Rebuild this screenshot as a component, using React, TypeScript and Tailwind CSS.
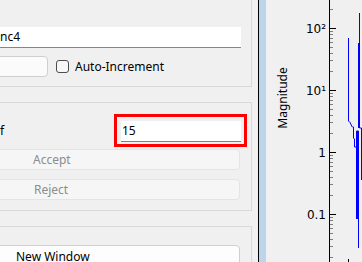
import React from "react";

const decades = [28, 90, 152, 214];

const minorTicks = () => {
  const ys: number[] = [];
  [28, 90, 152, 214, 276].forEach((base) => {
    for (let k = 2; k <= 9; k++) {
      const y = Math.round(base - 62 * Math.log10(k));
      if (y >= 0 && y <= 262) ys.push(y);
    }
  });
  return ys;
};

const Plot = () => {
  const labels: { y: number; text: string }[] = [
    { y: 28, text: "10²" },
    { y: 90, text: "10¹" },
    { y: 152, text: "1" },
    { y: 214, text: "0.1" },
  ];
  return (
    <div className="relative w-[96px] h-[262px] shrink-0">
      <svg width="96" height="262" viewBox="0 0 96 262" className="block">
        <text
          transform="translate(21,98) rotate(-90)"
          textAnchor="middle"
          fontFamily="'Noto Sans', sans-serif"
          fontSize="12"
          fill="#000"
        >
          Magnitude
        </text>
        <line x1="63.5" y1="0" x2="63.5" y2="262" stroke="#000" />
        {decades.map((y) => (
          <line key={y} x1="63.5" y1={y + 0.5} x2="70" y2={y + 0.5} stroke="#000" />
        ))}
        {minorTicks().map((y, i) => (
          <line key={i} x1="64" y1={y + 0.5} x2="67" y2={y + 0.5} stroke="#808080" />
        ))}
        {labels.map((l) => (
          <text
            key={l.text}
            x="60"
            y={l.y + 5}
            textAnchor="end"
            fontFamily="'DejaVu Sans', sans-serif"
            fontSize="12"
            fill="#000"
          >
            {l.text}
          </text>
        ))}
        <line x1="82.5" y1="259" x2="82.5" y2="262" stroke="#000" />
        <g fill="none" stroke="#0000ff" strokeWidth="1">
          <path d="M82.5,38 V121 L84.5,123 V124 L85.5,125 V126 L86.5,127 H87.5 V138 L88.5,139 V147 H90.5 V131 H92.5" />
          <path d="M92.5,131 V248" />
          <path d="M93.5,13 V43" />
          <path d="M93.5,128 H95.5 V180" />
          <path d="M91,131 V219" strokeWidth="2" />
          <path d="M93,43 V128" strokeWidth="2" />
        </g>
      </svg>
    </div>
  );
};

export default function App() {
  return (
    <div className="w-[362px] h-[262px] overflow-hidden bg-[#f0f0f0] flex text-[12px] text-black font-['Noto_Sans',sans-serif] leading-none">
      <div className="w-[252px] shrink-0 flex flex-col">
        {/* group 1 */}
        <div className="h-[87px] shrink-0 border-r border-b border-[#d9d9d9] pt-[27px] flex flex-col">
          <div className="h-[21px] w-[241px] bg-white border-b border-[#868686] flex items-center">
            nc4
          </div>
          <div className="mt-[8px] h-[21px] flex items-center">
            <div className="h-[21px] w-[52px] -ml-[4px] bg-[#fbfbfb] border border-[#cfcfcf] rounded-[4px]" />
            <div className="ml-[8px] w-[13px] h-[13px] border border-[#4d4d4d] rounded-[3px] bg-[#f7f7f7]" />
            <span className="ml-[6px]">Auto-Increment</span>
          </div>
        </div>

        {/* group 2 */}
        <div className="mt-[15px] h-[109px] shrink-0 border-t border-r border-b border-[#d9d9d9] pt-[11px] flex flex-col">
          <div className="flex items-center h-[33px]">
            <span className="w-[114px]">f</span>
            <div className="w-[133px] h-[33px] border-[3px] border-[#ff0000] pl-[4px] pt-[4px]">
              <div className="w-[120px] h-[21px] bg-white border-b border-[#808080] flex items-center pl-[1px]">
                15
              </div>
            </div>
          </div>
          <div className="mt-[2px] h-[21px] w-[244px] -ml-[4px] bg-[#f6f6f6] border border-[#e4e4e4] rounded-[4px] flex items-center pl-[36px] text-[#8c8c8c]">
            Accept
          </div>
          <div className="mt-[9px] h-[21px] w-[244px] -ml-[4px] bg-[#f6f6f6] border border-[#e4e4e4] rounded-[4px] flex items-center pl-[37px] text-[#8c8c8c]">
            Reject
          </div>
        </div>

        {/* group 3 */}
        <div className="mt-[15px] flex-1 border-t border-r border-[#d9d9d9] pt-[18px]">
          <div className="h-[23px] w-[244px] -ml-[4px] bg-[#fdfdfd] border border-[#d0d0d0] rounded-[4px] flex items-center pl-[19px]">
            New Window
          </div>
        </div>
      </div>

      {/* splitter */}
      <div className="w-[6px] shrink-0" />
      <div className="w-[1px] shrink-0 bg-black" />
      <div className="w-[7px] shrink-0 bg-[#bdd4eb]" />

      <Plot />
    </div>
  );
}
